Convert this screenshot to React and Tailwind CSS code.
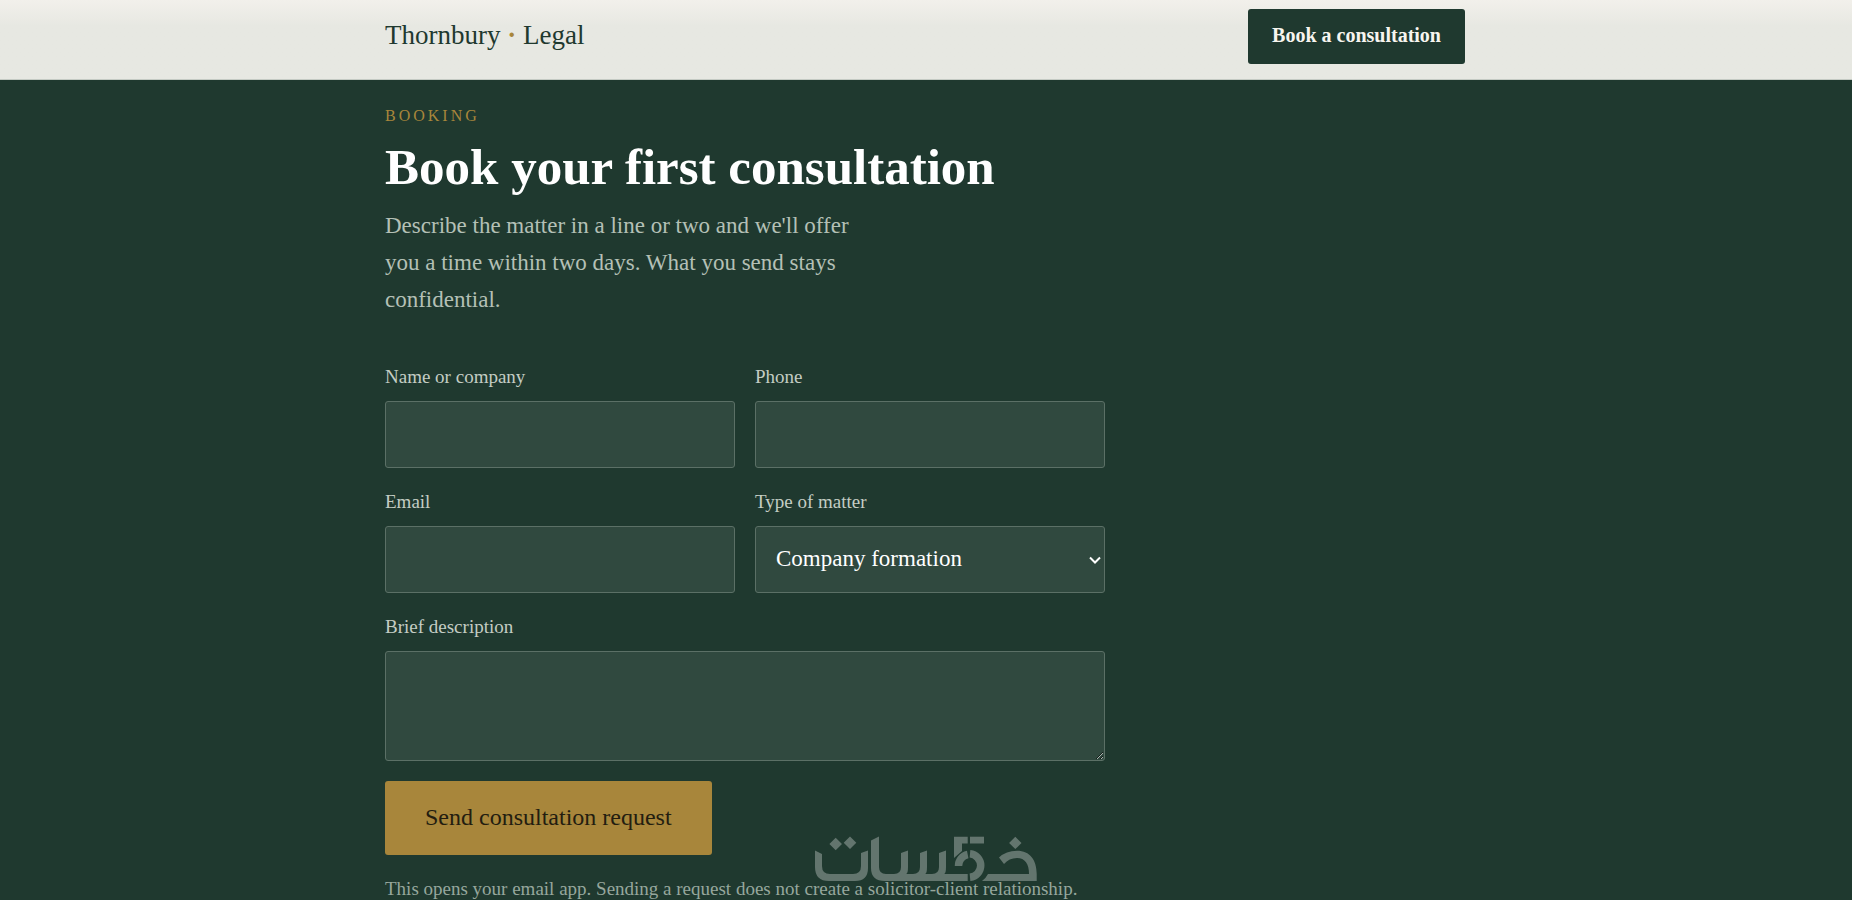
import React from 'react';

const fieldClass =
  'block w-full rounded-[3px] border border-[#5b7066] bg-[#30493f] text-[23px] text-white outline-none';
const labelClass = 'mb-[11px] block text-[19px] leading-[26px] text-[#c4cdc4]';

function Field({ id, label, children }) {
  return (
    <div>
      <label htmlFor={id} className={labelClass}>{label}</label>
      {children}
    </div>
  );
}

function KhamsatMark() {
  return (
    <svg
      role="img"
      aria-label="Khamsat"
      viewBox="0 0 222 45"
      className="pointer-events-none absolute bottom-[19px] left-1/2 -ml-[111px] h-[45px] w-[222px] opacity-30"
    >
      <g fill="#ffffff">
        <path d="M0 14.500L7 18V30Q7 38 15 38H38Q46 38 46 30V17L53 14.500V32Q53 45 40 45H14Q0 45 0 31Z" />
        <path d="M56 4.500L64 0.500V31Q64 38 71 38H79Q86 38 86 31V17L93 14.500V31Q93 38 91 38H98Q105 38 105 31V17L112 14.500V31Q112 38 110 38H117Q124 38 124 31V17L131 14.500V31Q131 38 129 38H152.700V45H70Q56 45 56 32Z" />
        <path d="M139 0.700H152.700V7.500H147V15L139 22Z" />
        <path d="M155 0.700H169V7.500H155Z" />
        <path d="M20.700 1.700l6.300 6.300-6.300 6.300-6.300-6.300zM35 0.400l6.300 6.300-6.300 6.300-6.300-6.300zM200.300 0.700l6.200 6.200-6.200 6.200-6.200-6.200z" />
        <path d="M173 38H214C214 28 210 22 202 22Q194 22 189 28L184 21.500Q191 14.700 202 14.700C215 14.700 221.700 24 221.700 38V45H167Q171 42 173 38Z" />
      </g>
      <g fill="none" stroke="#ffffff" strokeWidth="7.500">
        <path d="M143.500 30A11.500 11.500 0 0 1 152.700 18.500" />
        <path d="M155 17.800A11.800 11.800 0 0 1 155 41.300" />
      </g>
    </svg>
  );
}

export default function App() {
  return (
    <div className="relative h-screen overflow-hidden bg-[#1f392f] font-['Liberation_Serif',serif]">
      <header className="border-b border-[#c4cac3] bg-linear-to-b from-[#f2f0eb] to-[#e7e8e2] to-[26px] pr-0.5">
        <div className="mx-auto flex max-w-[1080px] items-start justify-between pt-[9px] pb-[15px]">
          <a href="#top" className="py-2 text-[27px] leading-9 text-[#1f392f]">
            Thornbury <span className="font-bold text-[#a8863b]">·</span> Legal
          </a>
          <a
            href="#booking"
            className="rounded-[3px] bg-[#1f392f] px-6 pt-[11px] pb-[13px] text-[20px] leading-[31px] font-bold text-[#f7f5ef]"
          >
            Book a consultation
          </a>
        </div>
      </header>

      <main id="booking" className="pt-[22px] pr-0.5">
        <div className="mx-auto max-w-[1080px]">
          <p className="text-[16px] leading-7 tracking-[3px] text-[#a8863b]">BOOKING</p>
          <h1 className="mt-2 text-[51px] leading-[58px] font-bold text-white">
            Book your first consultation
          </h1>
          <p className="mt-[11px] max-w-[500px] text-[23px] leading-[37px] text-[#b4c0b6]">
            Describe the matter in a line or two and we'll offer you a time within two days. What
            you send stays confidential.
          </p>

          <form className="mt-[46px] max-w-[720px]" onSubmit={(e) => e.preventDefault()}>
            <div className="grid grid-cols-2 gap-x-5 gap-y-[21px]">
              <Field id="name" label="Name or company">
                <input id="name" type="text" className={`${fieldClass} h-[67px] px-5`} />
              </Field>
              <Field id="phone" label="Phone">
                <input id="phone" type="tel" className={`${fieldClass} h-[67px] px-5`} />
              </Field>
              <Field id="email" label="Email">
                <input id="email" type="email" className={`${fieldClass} h-[67px] px-5`} />
              </Field>
              <Field id="matter" label="Type of matter">
                <div className="relative">
                  <select id="matter" className={`${fieldClass} h-[67px] appearance-none px-5`}>
                    <option>Company formation</option>
                  </select>
                  <svg
                    viewBox="0 0 12 8"
                    className="pointer-events-none absolute top-1/2 right-1 h-2 w-3 -translate-y-1/2"
                    fill="none"
                    stroke="#ffffff"
                    strokeWidth="2"
                    aria-hidden="true"
                  >
                    <path d="M1 1.500L6 6.500L11 1.500" />
                  </svg>
                </div>
              </Field>
              <div className="col-span-2">
                <Field id="description" label="Brief description">
                  <textarea
                    id="description"
                    className={`${fieldClass} h-[110px] resize-y px-5 py-4`}
                  />
                </Field>
              </div>
            </div>
            <button
              type="submit"
              className="mt-5 rounded-[3px] bg-[#a8863b] px-10 pt-[19px] pb-[21px] text-[24px] leading-[34px] text-[#231d10]"
            >
              Send consultation request
            </button>
            <p className="mt-5 text-[19px] leading-7 whitespace-nowrap text-[#96a79d]">
              This opens your email app. Sending a request does not create a solicitor-client
              relationship.
            </p>
          </form>
        </div>
      </main>

      <KhamsatMark />
    </div>
  );
}
